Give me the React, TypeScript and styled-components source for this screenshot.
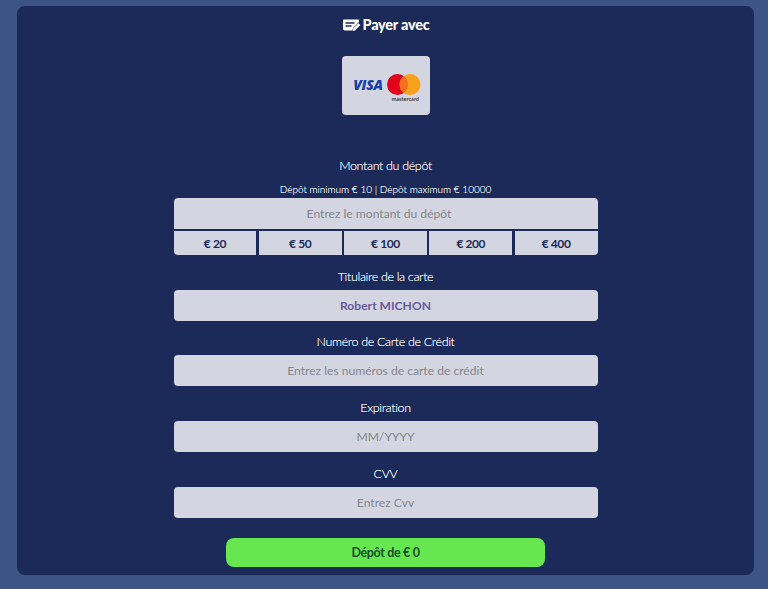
import React from "react";
import styled, { createGlobalStyle } from "styled-components";

const Global = createGlobalStyle`
  html, body { margin: 0; padding: 0; background: #3d5586; }
  body { font-family: Lato, "Open Sans", sans-serif; }
  * { box-sizing: border-box; }
`;

const Page = styled.div`
  width: 768px;
  height: 589px;
  padding: 6px 14px 14px 17px;
  background: #3d5586;
  overflow: hidden;
`;

const Panel = styled.main`
  height: 569px;
  border-radius: 8px;
  background: #1c2a5a;
  display: flex;
  flex-direction: column;
  align-items: center;
  padding-top: 10px;
`;

const Title = styled.h1`
  margin: 0;
  height: 18px;
  display: flex;
  align-items: center;
  gap: 2px;
  font-size: 14.5px;
  line-height: 18px;
  font-weight: 900;
  letter-spacing: -0.25px;
  color: #fff;
`;

const PayCard = styled.div`
  width: 88px;
  height: 59px;
  margin-top: 22px;
  border-radius: 4px;
  background: #d3d6e0;
  display: flex;
  align-items: center;
  justify-content: center;
  gap: 4px;
  padding: 6px 0 0 3px;
`;

const VisaText = styled.span`
  margin-bottom: 8px;
  font-family: "Open Sans", sans-serif;
  font-size: 14px;
  font-weight: 800;
  font-style: italic;
  letter-spacing: -0.3px;
  color: #1a3fa8;
`;

const Form = styled.form`
  width: 424px;
  display: flex;
  flex-direction: column;
  margin: 0;
`;

const Label = styled.label<{ $top: number }>`
  display: block;
  height: 18px;
  margin-top: ${(p) => p.$top}px;
  margin-bottom: 4px;
  text-align: center;
  font-size: 12.5px;
  line-height: 18px;
  font-weight: 300;
  letter-spacing: -0.35px;
  color: #fff;
  text-shadow: 0 0 0.5px rgba(255, 255, 255, 0.7);
`;

const Hint = styled.div`
  height: 14px;
  margin-top: 3px;
  margin-bottom: 2px;
  text-align: center;
  font-size: 10px;
  line-height: 14px;
  font-weight: 300;
  color: #fff;
  text-shadow: 0 0 0.4px rgba(255, 255, 255, 0.7);
`;

const Field = styled.input<{ $filled?: boolean; $offset?: boolean }>`
  display: block;
  width: 100%;
  height: 31px;
  border: 0;
  outline: 0;
  padding: 0 ${(p) => (p.$offset ? 25 : 12)}px 0 12px;
  background: #d3d6e0;
  border-radius: ${(p) => (p.$offset ? "4px 4px 0 0" : "4px")};
  text-align: center;
  font-family: inherit;
  font-size: 12.1px;
  font-weight: ${(p) => (p.$filled ? 700 : 400)};
  color: #6a5a9a;
  &::placeholder {
    color: #85858d;
    opacity: 1;
  }
`;

const Amounts = styled.div`
  display: grid;
  grid-template-columns: repeat(5, 1fr);
  gap: 2.5px;
  margin-top: 2px;
`;

const Amount = styled.button`
  height: 24px;
  border: 0;
  padding: 0;
  background: #d3d6e0;
  font-family: inherit;
  font-size: 12px;
  font-weight: 700;
  letter-spacing: -0.4px;
  color: #1c2a5a;
  &:first-child { border-bottom-left-radius: 4px; }
  &:last-child { border-bottom-right-radius: 4px; }
`;

const Submit = styled.button`
  width: 319px;
  height: 29px;
  margin: 20px auto 0;
  border: 0;
  border-radius: 8px;
  background: #66e64f;
  font-family: inherit;
  font-size: 12.5px;
  font-weight: 700;
  letter-spacing: -0.35px;
  color: #15502a;
`;

const WriteIcon = () => (
  <svg width="19" height="13" viewBox="0 0 19 13" aria-hidden="true">
    <path d="M1 1.5 C1 .8 1.4.5 2 .5 H16 C16.8.5 17 1 17 1.5 V3 L11 9 L10.4 11.5 H3 C1.8 11.5 1 10.8 1 9.6 Z" fill="#fff" />
    <path d="M3.5 4 H12.5 M3.5 7 H9.5" stroke="#1c2a5a" strokeWidth="1.3" />
    <path d="M16.5 4.2 L18.4 6 L13 11.4 L10.8 12 L11.2 9.6 Z" fill="#fff" />
  </svg>
);

const MastercardIcon = () => (
  <svg width="34" height="29" viewBox="0 0 34 29" aria-hidden="true">
    <circle cx="10.5" cy="10.5" r="10.5" fill="#e3001b" />
    <circle cx="23" cy="10.5" r="10.5" fill="#f9a11b" />
    <path d="M16.75 2.1 A10.5 10.5 0 0 1 16.75 18.9 A10.5 10.5 0 0 1 16.75 2.1 Z" fill="#f3701f" />
    <text x="32" y="27" textAnchor="end" fontFamily="Lato, sans-serif" fontSize="5.5" fontWeight="700" fill="#3a3a3a">
      mastercard
    </text>
  </svg>
);

const amounts = [20, 50, 100, 200, 400];

export default function App() {
  return (
    <Page>
      <Global />
      <Panel>
        <Title>
          <WriteIcon />
          Payer avec
        </Title>
        <PayCard>
          <VisaText>VISA</VisaText>
          <MastercardIcon />
        </PayCard>
        <Form onSubmit={(e) => e.preventDefault()}>
          <Label $top={42}>Montant du dépôt</Label>
          <Hint>Dépôt minimum € 10 | Dépôt maximum € 10000</Hint>
          <Field $offset placeholder="Entrez le montant du dépôt" />
          <Amounts>
            {amounts.map((a) => (
              <Amount key={a} type="button">€ {a}</Amount>
            ))}
          </Amounts>
          <Label $top={13}>Titulaire de la carte</Label>
          <Field $filled defaultValue="Robert MICHON" />
          <Label $top={12}>Numéro de Carte de Crédit</Label>
          <Field placeholder="Entrez les numéros de carte de crédit" />
          <Label $top={13}>Expiration</Label>
          <Field placeholder="MM/YYYY" />
          <Label $top={13}>CVV</Label>
          <Field placeholder="Entrez Cvv" />
          <Submit type="submit">Dépôt de € 0</Submit>
        </Form>
      </Panel>
    </Page>
  );
}
